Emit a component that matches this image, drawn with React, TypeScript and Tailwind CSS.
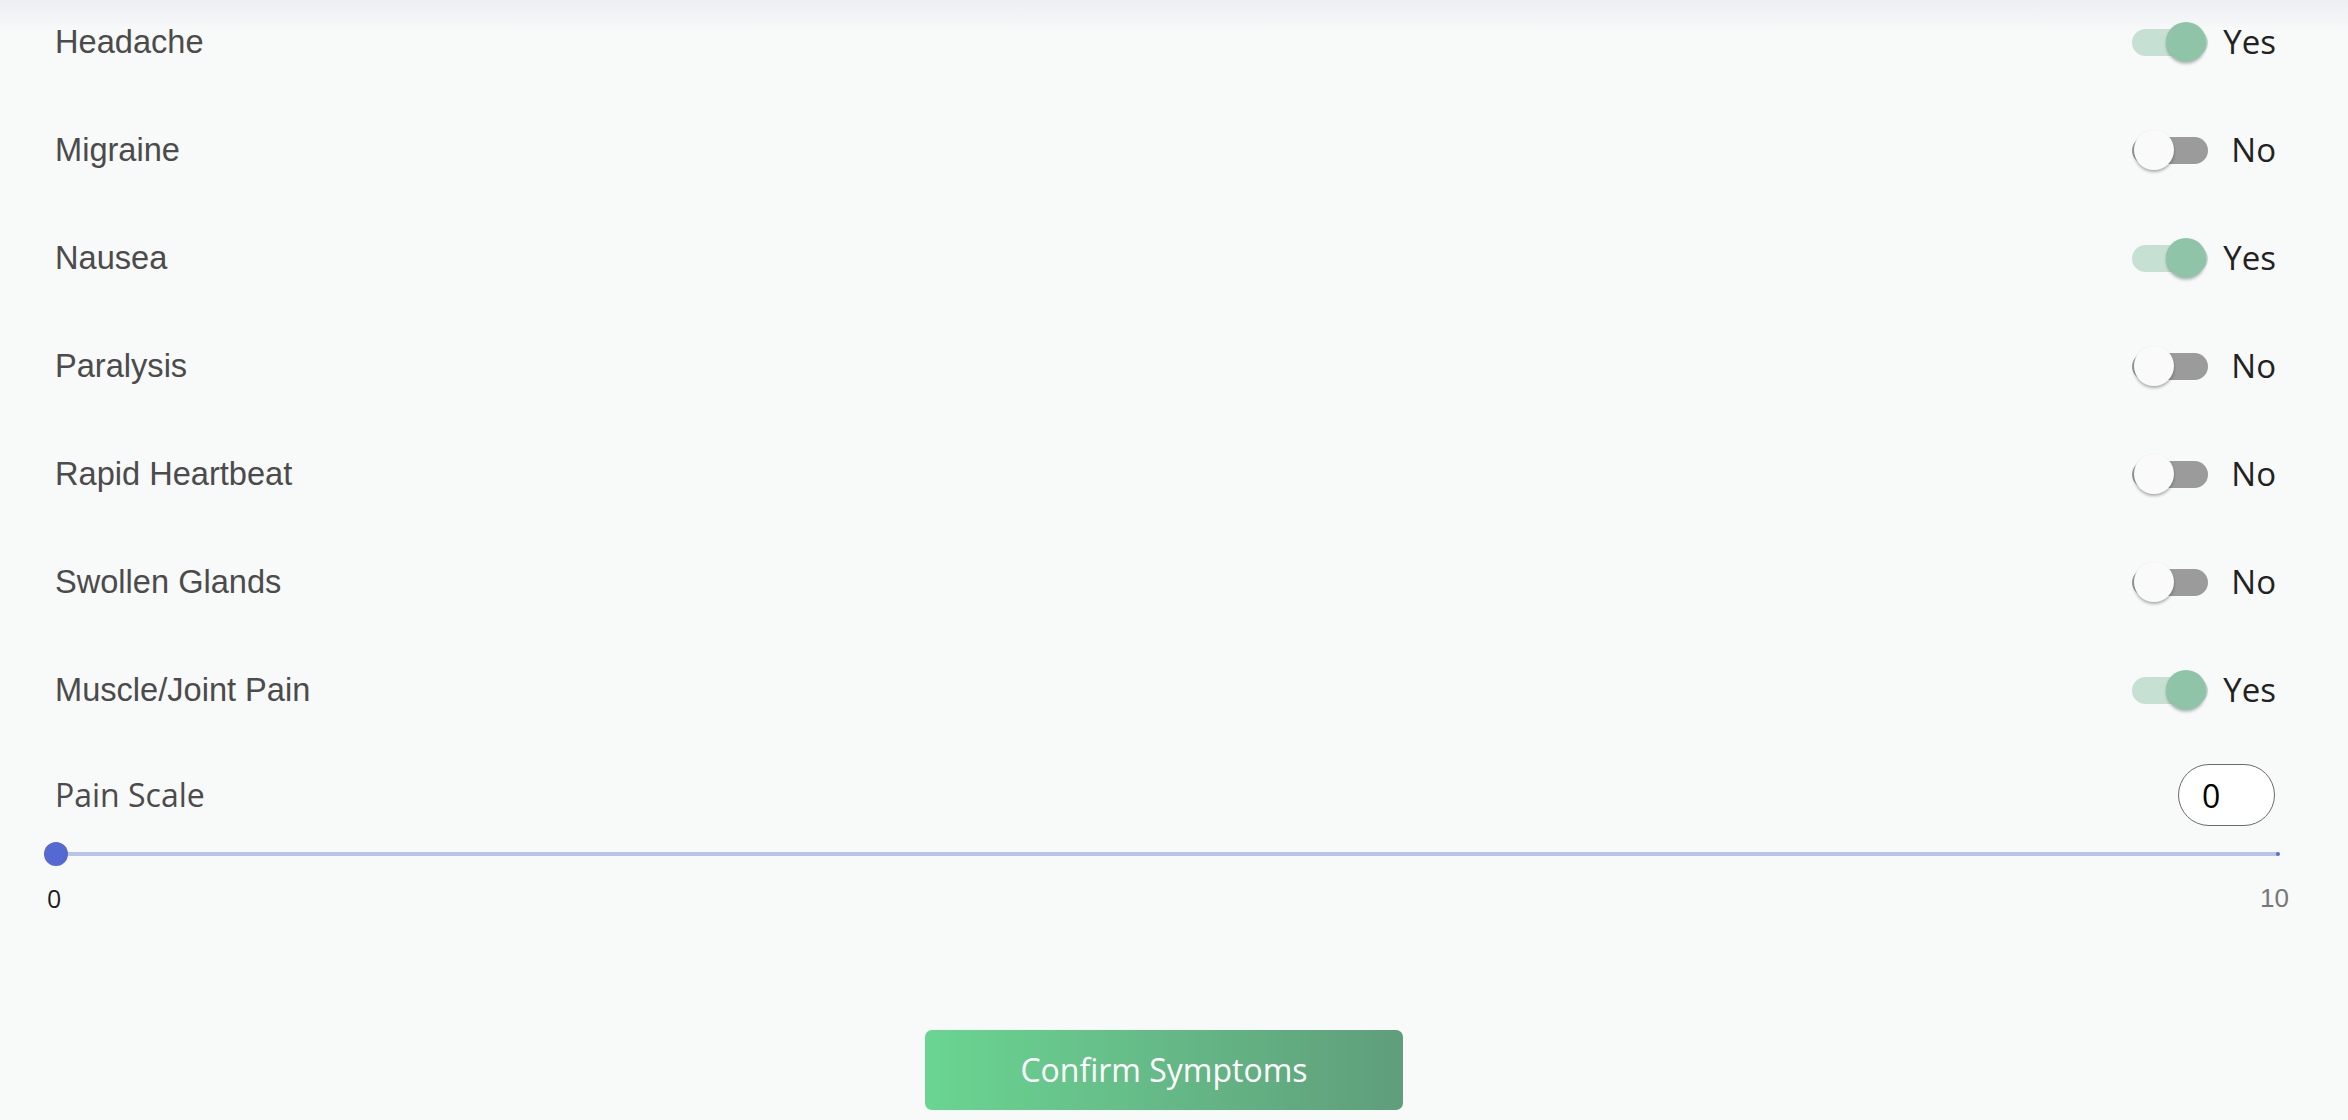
import React, { useState } from "react";

type Symptom = {
  name: string;
  on: boolean;
};

const initialSymptoms: Symptom[] = [
  { name: "Headache", on: true },
  { name: "Migraine", on: false },
  { name: "Nausea", on: true },
  { name: "Paralysis", on: false },
  { name: "Rapid Heartbeat", on: false },
  { name: "Swollen Glands", on: false },
  { name: "Muscle/Joint Pain", on: true },
];

function Toggle({ on, onClick }: { on: boolean; onClick: () => void }) {
  return (
    <button
      type="button"
      onClick={onClick}
      className="relative flex h-[40px] w-[76px] items-center"
    >
      <span
        className={
          on
            ? "h-[27px] w-full rounded-full bg-[#c6e1d3]"
            : "h-[27px] w-full rounded-full bg-[#9b9b9b]"
        }
      />
      <span
        className={
          on
            ? "absolute right-[2px] top-0 h-[40px] w-[40px] rounded-full bg-[#8fc4a8] shadow-[0_2px_3px_rgba(0,0,0,0.25)]"
            : "absolute left-[2px] top-0 h-[40px] w-[40px] rounded-full bg-[#fafafa] shadow-[0_2px_3px_rgba(0,0,0,0.3)]"
        }
      />
    </button>
  );
}

export default function App() {
  const [symptoms, setSymptoms] = useState(initialSymptoms);
  const [pain] = useState(0);

  const toggle = (i: number) => {
    setSymptoms((prev) =>
      prev.map((s, idx) => (idx === i ? { ...s, on: !s.on } : s))
    );
  };

  return (
    <div className="relative min-h-screen w-full overflow-hidden bg-[#f8f9f9]">
      <div className="pointer-events-none absolute inset-x-0 top-0 h-[30px] bg-linear-to-b from-[#eceef1] to-[#f8f9f9]/0" />

      <div className="pl-[56px] pr-[70px]">
        <div className="-mt-[12px] flex flex-col">
          {symptoms.map((s, i) => (
            <div key={s.name} className="flex h-[108px] items-center justify-between">
              <span className="-ml-[1px] font-['Liberation_Sans',Arial,sans-serif] text-[32.6px] text-[#4b4b4b]">
                {s.name}
              </span>
              <div className="flex items-center">
                <Toggle on={s.on} onClick={() => toggle(i)} />
                <span className="w-[70px] pr-[2px] text-right font-['Open_Sans',sans-serif] text-[33px] text-[#222]">
                  {s.on ? "Yes" : "No"}
                </span>
              </div>
            </div>
          ))}
        </div>

        <div className="mt-[20px] flex items-center justify-between">
          <span className="-ml-[1px] font-['Open_Sans',sans-serif] text-[32px] text-[#4b4b4b]">
            Pain Scale
          </span>
          <input
            readOnly
            value={pain}
            className="mr-[3px] h-[62px] w-[97px] rounded-full border-[1.5px] border-[#6b6b6b] bg-white pl-[23px] font-['Open_Sans',sans-serif] text-[32px] text-black outline-none"
          />
        </div>

        {/* slider */}
        <div className="relative mt-[16px] h-[24px]">
          <div className="absolute inset-x-0 top-[10px] h-[4px] bg-[#b8c4ea]" />
          <div className="absolute right-[-2px] top-[10px] h-[4px] w-[4px] rounded-full bg-[#5a6dd6]" />
          <div className="absolute left-[-12px] top-0 h-[24px] w-[24px] rounded-full bg-[#5669d2]" />
        </div>
        <div className="mt-[15px] flex justify-between leading-[34px]">
          <span className="-translate-x-[9px] font-['Open_Sans',sans-serif] text-[25px] text-[#1c1c1c]">0</span>
          <span className="translate-x-[11px] font-['Liberation_Sans',Arial,sans-serif] text-[26px] text-[#777]">10</span>
        </div>

        <div className="mt-[115px] flex justify-center pr-[6px]">
          <button
            type="button"
            className="h-[80px] w-[478px] rounded-[7px] bg-linear-to-r from-[#6ad592] to-[#5f9e7b] font-['Open_Sans',sans-serif] text-[32px] text-white"
          >
            Confirm Symptoms
          </button>
        </div>
      </div>
    </div>
  );
}
